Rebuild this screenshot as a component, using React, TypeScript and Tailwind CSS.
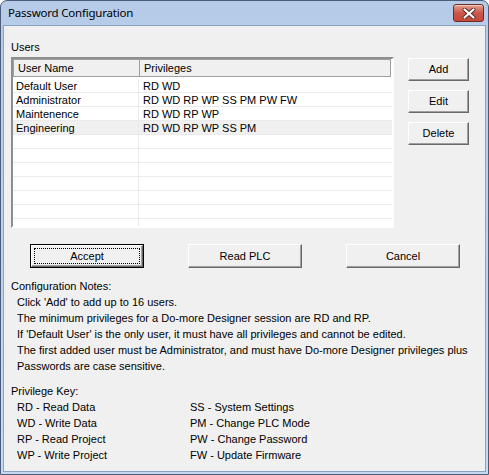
import React from 'react'

const users = [
  { name: 'Default User', privs: 'RD WD' },
  { name: 'Administrator', privs: 'RD WD RP WP SS PM PW FW' },
  { name: 'Maintenence', privs: 'RD WD RP WP' },
  { name: 'Engineering', privs: 'RD WD RP WP SS PM', dim: true },
]

const notes = [
  "Click 'Add' to add up to 16 users.",
  'The minimum privileges for a Do-more Designer session are RD and RP.',
  "If 'Default User' is the only user, it must have all privileges and cannot be edited.",
  'The first added user must be Administrator, and must have Do-more Designer privileges plus',
  'Passwords are case sensitive.',
]

const keyLeft = ['RD - Read Data', 'WD - Write Data', 'RP - Read Project', 'WP - Write Project']
const keyRight = ['SS - System Settings', 'PM - Change PLC Mode', 'PW - Change Password', 'FW - Update Firmware']

function Btn({ label, w, h, def }: { label: string; w: string; h: string; def?: boolean }) {
  const inner = (
    <div
      className={`relative flex items-center justify-center bg-[#f0f0f0] border border-t-white border-l-white border-r-[#696969] border-b-[#696969] shadow-[inset_-1px_-1px_0_#a0a0a0] ${def ? 'w-full h-full' : `${w} ${h}`}`}
    >
      {def && <div className="absolute inset-[2px] border border-dotted border-black" />}
      <span className="relative">{label}</span>
    </div>
  )
  if (def) return <div className={`${w} ${h} border border-black`}>{inner}</div>
  return inner
}

export default function App() {
  const rows = Array.from({ length: 11 }, (_, i) => users[i])
  return (
    <div
      className="w-[489px] h-[475px] flex flex-col border border-[#4a5c78] rounded-t-[7px] bg-gradient-to-b from-[#b6cbe7] to-[#c6daf2] text-[11px] text-black"
      style={{ fontFamily: '"Liberation Sans", Arial, sans-serif' }}
    >
      <div className="h-[24px] flex items-start shrink-0">
        <span
          className="ml-[7px] mt-[5px] text-[11.5px] leading-[14px] text-black tracking-[-0.2px]"
          style={{ fontFamily: '"Noto Sans", "Liberation Sans", sans-serif' }}
        >
          Password Configuration
        </span>
        <div className="ml-auto mr-[4px] mt-[3px] w-[31px] h-[18px] rounded-[3px] border border-[#6e2a22] bg-gradient-to-b from-[#e4a190] via-[#c9564a] to-[#c8473a] shadow-[inset_0_1px_0_rgba(255,255,255,0.5)] flex items-center justify-center">
          <svg width="14" height="11" viewBox="0 0 14 11">
            <path d="M2.5 1.5 L11.5 9.5 M11.5 1.5 L2.5 9.5" stroke="#5a2a26" strokeWidth="4" strokeLinecap="round" />
            <path d="M2.5 1.5 L11.5 9.5 M11.5 1.5 L2.5 9.5" stroke="#ffffff" strokeWidth="2.2" strokeLinecap="round" />
          </svg>
        </div>
      </div>

      <div className="flex-1 mx-[2px] mb-[2px] border border-[#8ba3c2] bg-[#f0f0f0] flex flex-col pl-[7px]">
        <div className="mt-[15px] leading-[13px]">Users</div>
        <div className="mt-[3px] flex">
          <div className="w-[383px] h-[171px] border-2 border-t-[#8e8e8e] border-l-[#8e8e8e] border-r-white border-b-white bg-white overflow-hidden">
            <div className="flex h-[18px] bg-[#f0f0f0] border-t border-l border-b border-[#a0a0a0] w-[378px]">
              <div className="w-[126px] border-r border-[#a0a0a0] pl-[4px] leading-[16px]">User Name</div>
              <div className="flex-1 border-r border-[#a0a0a0] pl-[4px] leading-[16px]">Privileges</div>
            </div>
            <div className="mt-[2px]">
              {rows.map((u, i) => (
                <div
                  key={i}
                  className={`flex h-[14px] border-b border-[#ebebeb] ${u?.dim ? 'bg-[#f0f0f0]' : ''}`}
                >
                  <div className="w-[126px] border-r border-[#ebebeb] pl-[3px] leading-[14px]">{u?.name}</div>
                  <div className="flex-1 pl-[4px] leading-[14px]">{u?.privs}</div>
                </div>
              ))}
            </div>
          </div>
          <div className="ml-[14px] mt-[1px] flex flex-col gap-[9px]">
            <Btn label="Add" w="w-[61px]" h="h-[23px]" />
            <Btn label="Edit" w="w-[61px]" h="h-[23px]" />
            <Btn label="Delete" w="w-[61px]" h="h-[23px]" />
          </div>
        </div>

        <div className="mt-[16px] pl-[19px] flex gap-[44px]">
          <Btn label="Accept" w="w-[114px]" h="h-[24px]" def />
          <Btn label="Read PLC" w="w-[114px]" h="h-[24px]" />
          <Btn label="Cancel" w="w-[114px]" h="h-[24px]" />
        </div>

        <div className="mt-[11px] leading-[15px]">Configuration Notes:</div>
        <div className="pl-[6px] leading-[16px]">
          {notes.map((n) => (
            <div key={n} className="whitespace-nowrap">{n}</div>
          ))}
        </div>

        <div className="mt-[10px] leading-[15px]">Privilege Key:</div>
        <div className="pl-[6px] flex leading-[16px]">
          <div className="w-[173px]">
            {keyLeft.map((k) => (
              <div key={k}>{k}</div>
            ))}
          </div>
          <div>
            {keyRight.map((k) => (
              <div key={k}>{k}</div>
            ))}
          </div>
        </div>
      </div>
    </div>
  )
}
